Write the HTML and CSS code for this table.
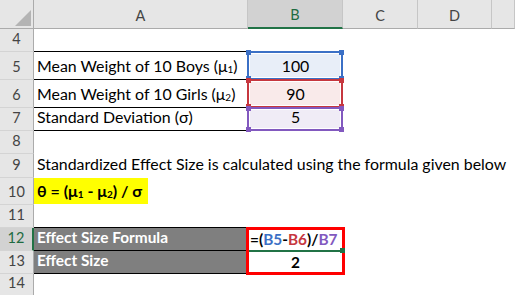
FILE: index.html
```html
<!DOCTYPE html>
<html>

<head>
    <title>Effect Size</title>
    <link rel="stylesheet" href="styles.css">
</head>

<body>

    <div class="sheet">
        <!-- column headers -->
        <div class="corner"></div>
        <div class="col-head">A</div>
        <div class="col-head sel">B</div>
        <div class="col-head">C</div>
        <div class="col-head">D</div>
        <div class="col-head"></div>

        <!-- row 4 -->
        <div class="row-head">4</div>
        <div class="cell line"></div>
        <div class="cell"></div>
        <div class="cell"></div>
        <div class="cell"></div>
        <div class="cell"></div>

        <!-- row 5 -->
        <div class="row-head">5</div>
        <div class="cell line"><span>Mean Weight of 10 Boys (&mu;<sub>1</sub>)</span></div>
        <div class="cell num ref blue">
            <span>100</span>
            <span class="frame"><i class="tl"></i><i class="tr"></i><i class="bl"></i><i class="br"></i></span>
        </div>
        <div class="cell"></div>
        <div class="cell"></div>
        <div class="cell"></div>

        <!-- row 6 -->
        <div class="row-head">6</div>
        <div class="cell line"><span>Mean Weight of 10 Girls (&mu;<sub>2</sub>)</span></div>
        <div class="cell num ref red">
            <span>90</span>
            <span class="frame"><i class="tl"></i><i class="tr"></i><i class="bl"></i><i class="br"></i></span>
        </div>
        <div class="cell"></div>
        <div class="cell"></div>
        <div class="cell"></div>

        <!-- row 7 -->
        <div class="row-head">7</div>
        <div class="cell line"><span>Standard Deviation (&sigma;)</span></div>
        <div class="cell num ref purple">
            <span>5</span>
            <span class="frame"><i class="tl"></i><i class="tr"></i><i class="bl"></i><i class="br"></i></span>
        </div>
        <div class="cell"></div>
        <div class="cell"></div>
        <div class="cell"></div>

        <!-- row 8 -->
        <div class="row-head">8</div>
        <div class="cell"></div>
        <div class="cell"></div>
        <div class="cell"></div>
        <div class="cell"></div>
        <div class="cell"></div>

        <!-- row 9 -->
        <div class="row-head">9</div>
        <div class="cell wide"><span>Standardized Effect Size is calculated using the formula given below</span></div>

        <!-- row 10 -->
        <div class="row-head">10</div>
        <div class="cell hl-cell"><span class="hl"><span>&theta; = (&mu;<sub>1</sub> - &mu;<sub>2</sub>) / &sigma;</span></span></div>
        <div class="cell"></div>
        <div class="cell"></div>
        <div class="cell"></div>
        <div class="cell"></div>

        <!-- row 11 -->
        <div class="row-head">11</div>
        <div class="cell line"></div>
        <div class="cell"></div>
        <div class="cell"></div>
        <div class="cell"></div>
        <div class="cell"></div>

        <!-- row 12 -->
        <div class="row-head sel">12</div>
        <div class="cell line dark"><span>Effect Size Formula</span></div>
        <div class="result">
            <div class="formula"><span>=(<span class="c-blue">B5</span>-<span class="c-red">B6</span>)/<span class="c-purple">B7</span></span></div>
            <div class="value"><span>2</span></div>
            <span class="handle"></span>
        </div>
        <div class="cell"></div>
        <div class="cell"></div>
        <div class="cell"></div>

        <!-- row 13 -->
        <div class="row-head">13</div>
        <div class="cell line dark"><span>Effect Size</span></div>
        <div class="cell"></div>
        <div class="cell"></div>
        <div class="cell"></div>

        <!-- row 14 -->
        <div class="row-head">14</div>
        <div class="cell"></div>
        <div class="cell"></div>
        <div class="cell"></div>
        <div class="cell"></div>
        <div class="cell"></div>
    </div>

</body>

</html>
```

FILE: styles.css
```css
* {
    box-sizing: border-box;
}

body {
    margin: 0;
    background-color: #fff;
    font-family: "Lato", "Liberation Sans", sans-serif;
    font-size: 15.9px;
    color: #000;
    overflow: hidden;
}

.sheet {
    display: grid;
    grid-template-columns: 34px 214px 95px 75px 74px 1fr;
    grid-template-rows: 29px 23px 28px 28px 23px 23px 24px 27px 23px 23px 23px 22px;
    height: 295px;
}

/* headers */

.corner {
    position: relative;
    background-color: #e6e6e6;
    border-right: 1px solid #ababab;
    border-bottom: 1px solid #ababab;
}

.corner::after {
    content: "";
    position: absolute;
    left: 15px;
    top: 10px;
    width: 16px;
    height: 16px;
    background-color: #b4b4b4;
    clip-path: polygon(100% 0, 100% 100%, 0 100%);
}

.col-head {
    display: flex;
    align-items: center;
    justify-content: center;
    padding-top: 2px;
    background-color: #e6e6e6;
    border-right: 1px solid #c6c6c6;
    border-bottom: 1px solid #ababab;
    color: #444;
    font-size: 14.5px;
}

.row-head {
    display: flex;
    align-items: flex-end;
    justify-content: center;
    padding-bottom: 4px;
    background-color: #e6e6e6;
    border-right: 1px solid #ababab;
    border-bottom: 1px solid #d4d4d4;
    color: #444;
    font-size: 14.5px;
}

.col-head.sel {
    background-color: #d2d2d2;
    border-bottom: 2px solid #217346;
    color: #1e6b41;
}

.row-head.sel {
    background-color: #d2d2d2;
    border-right: 2px solid #217346;
    color: #1e6b41;
}

/* cells */

.cell {
    display: flex;
    align-items: flex-end;
    padding: 0 3px 4px;
    border-bottom: 1px solid transparent;
    white-space: nowrap;
}

.cell.line {
    border-bottom-color: #000;
}

.cell.num {
    justify-content: center;
}

.cell.wide {
    grid-column: span 5;
}

.cell.dark {
    background-color: #7f7f7f;
    color: #fff;
    font-weight: bold;
    font-size: 15.4px;
}

sub {
    font-size: 10px;
    vertical-align: -1px;
    line-height: 0;
}

.hl-cell {
    padding: 0;
    align-items: stretch;
}

.hl {
    display: flex;
    align-items: flex-end;
    padding: 0 6px 4px 3px;
    background-color: #ffff00;
    font-weight: bold;
    font-size: 16px;
}

/* reference highlights around the input values */

.ref {
    position: relative;
}

.ref.blue {
    --ref: #3b70c6;
    background-color: #e8eef8;
}

.ref.red {
    --ref: #c6373f;
    background-color: #f9eaea;
}

.ref.purple {
    --ref: #8259bf;
    background-color: #f0ecf6;
}

.frame {
    position: absolute;
    top: -1px;
    left: -1px;
    right: 0;
    bottom: -1px;
    border: 2px solid var(--ref);
    box-shadow: inset 0 0 0 1px #fff;
}

.frame i {
    position: absolute;
    width: 5px;
    height: 5px;
    background-color: var(--ref);
}

.frame .tl { left: -3px; top: -3px; }
.frame .tr { right: -3px; top: -3px; }
.frame .bl { left: -3px; bottom: -3px; }
.frame .br { right: -3px; bottom: -3px; }

.c-blue { color: #3b70c6; }
.c-red { color: #c6373f; }
.c-purple { color: #8259bf; }

/* result block, B12:B13 */

.result {
    position: relative;
    grid-row: span 2;
    margin: -1px -2px -1px -2px;
    border: 3px solid #ff0000;
    display: flex;
    flex-direction: column;
    font-weight: bold;
    font-size: 15.4px;
}

.formula {
    height: 22px;
    display: flex;
    align-items: flex-end;
    padding: 0 0 2px 1px;
    border-bottom: 2px solid #217346;
    white-space: nowrap;
}

.value {
    flex: 1;
    display: flex;
    align-items: flex-end;
    justify-content: center;
    padding-bottom: 1px;
}

.handle {
    position: absolute;
    right: -3px;
    top: 18px;
    width: 5px;
    height: 5px;
    background-color: #217346;
}
```
